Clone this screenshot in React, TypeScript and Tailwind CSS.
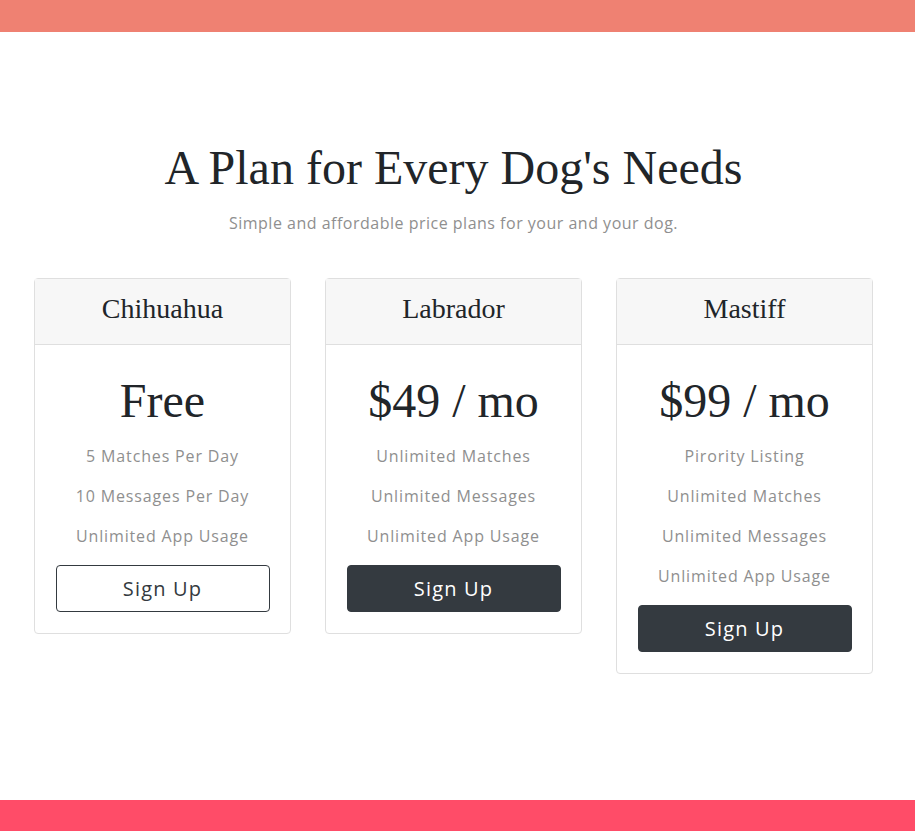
import React from "react";

const serif = { fontFamily: '"Liberation Serif", "Times New Roman", serif' };
const sans = { fontFamily: '"Open Sans", "Liberation Sans", sans-serif' };

type Plan = { name: string; price: string; features: string[]; dark: boolean };

const plans: Plan[] = [
  { name: "Chihuahua", price: "Free", features: ["5 Matches Per Day", "10 Messages Per Day", "Unlimited App Usage"], dark: false },
  { name: "Labrador", price: "$49 / mo", features: ["Unlimited Matches", "Unlimited Messages", "Unlimited App Usage"], dark: true },
  { name: "Mastiff", price: "$99 / mo", features: ["Pirority Listing", "Unlimited Matches", "Unlimited Messages", "Unlimited App Usage"], dark: true },
];

function Card({ plan }: { plan: Plan }) {
  return (
    <div className="w-[257px] rounded-[4px] border border-[#dfdfdf] bg-white">
      <div className="flex h-[66px] items-center justify-center border-b border-[#dfdfdf] bg-[#f7f7f7] pb-[5px]">
        <h3 className="text-[28px] leading-[1.2] text-[#212529]" style={serif}>{plan.name}</h3>
      </div>
      <div className="flex flex-col items-center px-[20px] pb-[21px] pt-[27px]">
        <h2 className="text-[48px] leading-[1.2] text-[#212529]" style={serif}>{plan.price}</h2>
        <div className="mt-[15px] flex flex-col items-center gap-[16px]">
          {plan.features.map((f) => (
            <p key={f} className="text-[16px] leading-[24px] tracking-[0.85px] text-[#8f8f8f]" style={sans}>{f}</p>
          ))}
        </div>
        <button
          className={
            "mt-[17px] h-[47px] w-[214px] rounded-[4px] border border-[#343a40] text-[20px] tracking-[1.2px] " +
            (plan.dark ? "bg-[#343a40] text-white" : "bg-white text-[#343a40]")
          }
          style={sans}
        >
          Sign Up
        </button>
      </div>
    </div>
  );
}

export default function App() {
  return (
    <div className="flex min-h-[831px] w-full flex-col bg-white">
      <div className="h-[32px] bg-[#ef8172]" />
      <div className="flex h-[768px] flex-col items-center pr-[8px] pt-[107px]">
        <h1 className="text-[48px] leading-[1.2] text-[#212529]" style={serif}>A Plan for Every Dog's Needs</h1>
        <p className="mt-[14px] text-[16px] leading-[24px] tracking-[0.5px] text-[#8f8f8f]" style={sans}>
          Simple and affordable price plans for your and your dog.
        </p>
        <div className="mt-[43px] flex items-start gap-[34px]">
          {plans.map((p) => (
            <Card key={p.name} plan={p} />
          ))}
        </div>
      </div>
      <div className="h-[31px] bg-[#ff4c68]" />
    </div>
  );
}
